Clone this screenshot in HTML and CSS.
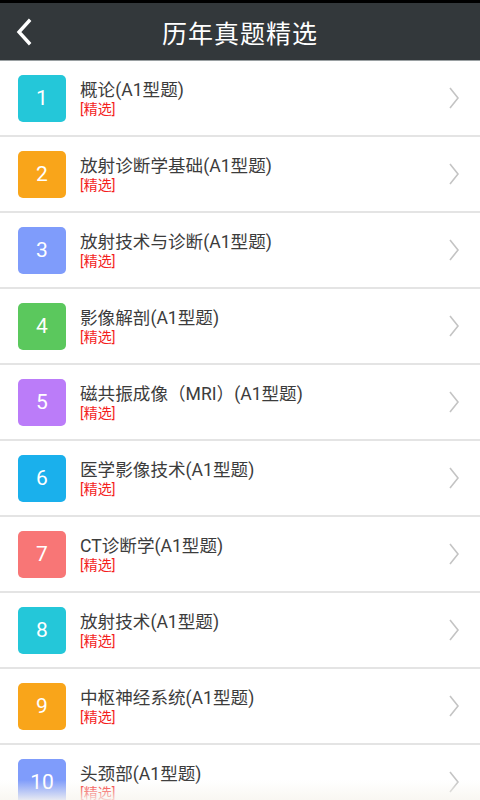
FILE: index.html
```html
<!DOCTYPE html>
<html lang="zh-CN">
<head>
<meta charset="utf-8">
<link rel="stylesheet" href="styles.css">
</head>
<body>
<div class="app">
  <header class="topbar">
    <div class="bar">
      <svg class="back" width="20" height="28" viewBox="0 0 20 28"><path d="M15 3 L5 14 L15 25" fill="none" stroke="#fff" stroke-width="3.4" stroke-linecap="square"/></svg>
      <h1 class="title">历年真题精选</h1>
    </div>
  </header>
  <ul class="list">
    <li class="row"><span class="badge c1">1</span><div class="text"><div class="name">概论(A1型题)</div><div class="tag">[精选]</div></div><svg class="chev" width="12" height="22" viewBox="0 0 12 22"><path d="M2 1 L10 11 L2 21" fill="none" stroke="#c4c4c4" stroke-width="1.6"/></svg></li>
    <li class="row"><span class="badge c2">2</span><div class="text"><div class="name">放射诊断学基础(A1型题)</div><div class="tag">[精选]</div></div><svg class="chev" width="12" height="22" viewBox="0 0 12 22"><path d="M2 1 L10 11 L2 21" fill="none" stroke="#c4c4c4" stroke-width="1.6"/></svg></li>
    <li class="row"><span class="badge c3">3</span><div class="text"><div class="name">放射技术与诊断(A1型题)</div><div class="tag">[精选]</div></div><svg class="chev" width="12" height="22" viewBox="0 0 12 22"><path d="M2 1 L10 11 L2 21" fill="none" stroke="#c4c4c4" stroke-width="1.6"/></svg></li>
    <li class="row"><span class="badge c4">4</span><div class="text"><div class="name">影像解剖(A1型题)</div><div class="tag">[精选]</div></div><svg class="chev" width="12" height="22" viewBox="0 0 12 22"><path d="M2 1 L10 11 L2 21" fill="none" stroke="#c4c4c4" stroke-width="1.6"/></svg></li>
    <li class="row"><span class="badge c5">5</span><div class="text"><div class="name">磁共振成像（MRI）(A1型题)</div><div class="tag">[精选]</div></div><svg class="chev" width="12" height="22" viewBox="0 0 12 22"><path d="M2 1 L10 11 L2 21" fill="none" stroke="#c4c4c4" stroke-width="1.6"/></svg></li>
    <li class="row"><span class="badge c6">6</span><div class="text"><div class="name">医学影像技术(A1型题)</div><div class="tag">[精选]</div></div><svg class="chev" width="12" height="22" viewBox="0 0 12 22"><path d="M2 1 L10 11 L2 21" fill="none" stroke="#c4c4c4" stroke-width="1.6"/></svg></li>
    <li class="row"><span class="badge c7">7</span><div class="text"><div class="name">CT诊断学(A1型题)</div><div class="tag">[精选]</div></div><svg class="chev" width="12" height="22" viewBox="0 0 12 22"><path d="M2 1 L10 11 L2 21" fill="none" stroke="#c4c4c4" stroke-width="1.6"/></svg></li>
    <li class="row"><span class="badge c1">8</span><div class="text"><div class="name">放射技术(A1型题)</div><div class="tag">[精选]</div></div><svg class="chev" width="12" height="22" viewBox="0 0 12 22"><path d="M2 1 L10 11 L2 21" fill="none" stroke="#c4c4c4" stroke-width="1.6"/></svg></li>
    <li class="row"><span class="badge c2">9</span><div class="text"><div class="name">中枢神经系统(A1型题)</div><div class="tag">[精选]</div></div><svg class="chev" width="12" height="22" viewBox="0 0 12 22"><path d="M2 1 L10 11 L2 21" fill="none" stroke="#c4c4c4" stroke-width="1.6"/></svg></li>
    <li class="row"><span class="badge c3">10</span><div class="text"><div class="name">头颈部(A1型题)</div><div class="tag">[精选]</div></div><svg class="chev" width="12" height="22" viewBox="0 0 12 22"><path d="M2 1 L10 11 L2 21" fill="none" stroke="#c4c4c4" stroke-width="1.6"/></svg></li>
  </ul>
  <div class="fade"></div>
</div>
</body>
</html>
```
FILE: styles.css
```css
* { box-sizing: border-box; }
html, body { margin: 0; padding: 0; }
body {
  width: 480px;
  height: 800px;
  overflow: hidden;
  background: #fff;
  font-family: Roboto, "Noto Sans CJK SC", sans-serif;
}
.app { position: relative; width: 480px; height: 800px; overflow: hidden; }
.topbar {
  border-top: 3px solid #000;
  border-bottom: 1px solid #9aa0a2;
  background: #33383b;
}
.bar {
  height: 57px;
  display: flex;
  align-items: center;
  justify-content: center;
  position: relative;
}
.back { position: absolute; left: 14px; top: 15px; }
.title {
  margin: 0;
  color: #fff;
  font-size: 25px;
  font-weight: 400;
  letter-spacing: 1px;
  font-family: "Noto Sans CJK SC", sans-serif;
}
.list { list-style: none; margin: 0; padding: 0; }
.row {
  height: 76px;
  display: flex;
  align-items: center;
  padding-left: 18px;
  padding-right: 20px;
  border-bottom: 2px solid #e4e4e4;
}
.badge {
  width: 48px;
  height: 47px;
  border-radius: 5px;
  flex: none;
  display: flex;
  align-items: center;
  justify-content: center;
  color: #fff;
  font-size: 21px;
  font-family: Roboto, sans-serif;
}
.c1 { background: #24c7d9; }
.c2 { background: #f9a51a; }
.c3 { background: #7f9cfb; }
.c4 { background: #5bc85d; }
.c5 { background: #bb7cf9; }
.c6 { background: #1ab0ec; }
.c7 { background: #f87676; }
.text { flex: 1; margin-left: 14px; margin-top: 1px; }
.name { font-size: 17.6px; line-height: 20px; color: #3c3c3c; }
.tag { font-size: 14px; line-height: 18px; color: #f41e1e; }
.chev { flex: none; }
.fade {
  position: absolute;
  left: 0; right: 0; bottom: 0;
  height: 20px;
  background: linear-gradient(to bottom, rgba(248,246,240,0), rgba(248,246,240,0.85));
}
```
